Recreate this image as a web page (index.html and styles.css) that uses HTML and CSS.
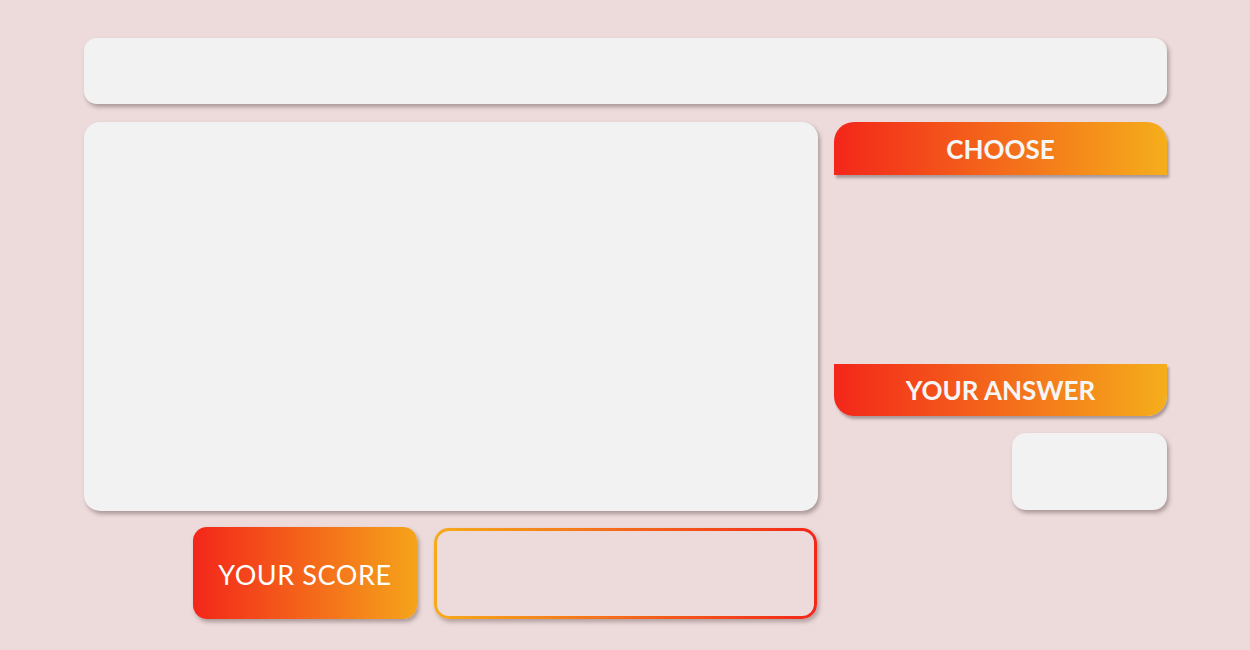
FILE: index.html
```html
<!DOCTYPE html>
<html lang="en">
<head>
<meta charset="utf-8">
<title>Quiz</title>
<link rel="stylesheet" href="styles.css">
</head>
<body>
<div class="page">
  <header class="topbar"></header>
  <div class="content">
    <div class="left">
      <section class="board"></section>
      <div class="score-row">
        <div class="score-label">YOUR SCORE</div>
        <div class="score-box"></div>
      </div>
    </div>
    <aside class="right">
      <div class="choose">CHOOSE</div>
      <div class="options"></div>
      <div class="answer-label">YOUR ANSWER</div>
      <div class="answer-box"></div>
    </aside>
  </div>
</div>
</body>
</html>
```

FILE: styles.css
```css
* { box-sizing: border-box; }
html, body { margin: 0; padding: 0; }
body {
  background: #eddbdb;
  font-family: "Lato", "Open Sans", sans-serif;
  width: 1250px;
  height: 650px;
  overflow: hidden;
}
.page {
  width: 1083px;
  margin: 38px 0 0 84px;
  display: flex;
  flex-direction: column;
  gap: 18px;
}
.topbar {
  height: 66px;
  background: #f2f2f2;
  border-radius: 13px;
  box-shadow: 2px 3px 4px rgba(90, 70, 70, 0.45);
}
.content {
  display: flex;
  gap: 16px;
}
.left {
  width: 734px;
  display: flex;
  flex-direction: column;
  gap: 16px;
}
.board {
  height: 389px;
  background: #f2f2f2;
  border-radius: 16px;
  box-shadow: 2px 3px 4px rgba(90, 70, 70, 0.45);
}
.score-row {
  display: flex;
  justify-content: flex-end;
  gap: 17px;
  padding-right: 1px;
}
.score-label {
  width: 224px;
  height: 92px;
  border-radius: 14px;
  background: linear-gradient(90deg, #f3261a, #f5a41b);
  box-shadow: 2px 3px 4px rgba(90, 70, 70, 0.45);
  color: #fff;
  font-size: 27px;
  font-weight: 400;
  letter-spacing: 0.6px;
  display: flex;
  align-items: center;
  justify-content: center;
  padding-top: 2px;
}
.score-box {
  width: 383px;
  height: 91px;
  border: 3px solid transparent;
  border-radius: 15px;
  background:
    linear-gradient(#eddbdb, #eddbdb) padding-box,
    linear-gradient(90deg, #f5ab1b, #f3261a) border-box;
  box-shadow: 2px 3px 4px rgba(90, 70, 70, 0.4);
  margin-top: 1px;
}
.right {
  width: 333px;
  display: flex;
  flex-direction: column;
  align-items: stretch;
}
.choose {
  height: 53px;
  border-radius: 20px 20px 0 0;
  background: linear-gradient(90deg, #f3261a, #f5ae1b);
  box-shadow: 2px 3px 3px rgba(90, 70, 70, 0.45);
  color: #f6f6f6;
  font-size: 26px;
  font-weight: 700;
  display: flex;
  align-items: center;
  justify-content: center;
}
.options {
  height: 189px;
}
.answer-label {
  height: 52px;
  border-radius: 0 0 20px 20px;
  background: linear-gradient(90deg, #f3261a, #f5ae1b);
  box-shadow: 2px 3px 3px rgba(90, 70, 70, 0.45);
  color: #f6f6f6;
  font-size: 26px;
  font-weight: 700;
  display: flex;
  align-items: center;
  justify-content: center;
}
.answer-box {
  align-self: flex-end;
  width: 155px;
  height: 77px;
  margin-top: 17px;
  background: #f2f2f2;
  border-radius: 14px;
  box-shadow: 2px 3px 4px rgba(90, 70, 70, 0.45);
}
```
